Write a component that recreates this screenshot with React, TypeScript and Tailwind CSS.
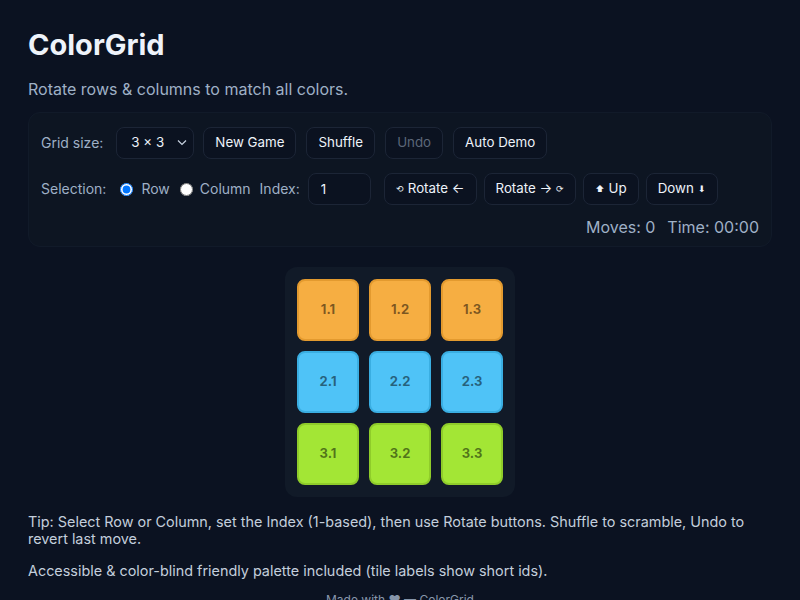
import React, { useState } from 'react';

const COLORS = ['#f6ae42', '#4fc3f7', '#a3e635'];
const BORDERS = ['#e39a2f', '#3aaee2', '#8fcc2a'];

const btnBase =
  'h-8 px-[11px] rounded-lg border border-[#1c2536] bg-[#0b1220] text-[13.33px] font-normal flex items-center gap-1';
const btn = `${btnBase} text-[#eef3fa]`;

const App: React.FC = () => {
  const [mode, setMode] = useState<'row' | 'col'>('row');
  const [index, setIndex] = useState('1');
  const size = 3;

  const tiles = Array.from({ length: size }, (_, r) =>
    Array.from({ length: size }, (_, c) => ({ r, c }))
  );

  return (
    <div
      className="min-h-screen bg-[#0b1221] text-[#e5ecf5] px-7 pt-7 pb-2"
      style={{ fontFamily: 'Inter, "Noto Sans", sans-serif' }}
    >
      {/* Header */}
      <h1 className="text-[29px] leading-[34px] font-bold text-[#eef3fa]">ColorGrid</h1>
      <p className="mt-[15px] text-base text-[#9fb0c6]">Rotate rows &amp; columns to match all colors.</p>

      {/* Controls */}
      <div className="mt-[11px] rounded-xl border border-[#111a29] bg-[#0d1522] px-3 pt-[14px] pb-[7px]">
        <div className="flex items-center">
          <span className="text-sm text-[#9fb0c6] mr-[13px]">Grid size:</span>
          <div className="relative mr-[9px]">
            <select className="appearance-none h-8 w-[78px] pl-[14px] rounded-lg border border-[#1c2536] bg-[#0b1220] text-[13.33px] text-[#eef3fa] outline-none">
              <option>3 × 3</option>
              <option>4 × 4</option>
              <option>5 × 5</option>
            </select>
            <svg
              className="pointer-events-none absolute right-[7px] top-[12px] w-[10px] h-[7px] text-[#c7d2e0]"
              viewBox="0 0 10 7"
              fill="none"
              stroke="currentColor"
              strokeWidth="1.2"
            >
              <path d="M1 1.5l4 4 4-4" />
            </svg>
          </div>
          <div className="flex items-center gap-[10px]">
            <button className={btn}>New Game</button>
            <button className={btn}>Shuffle</button>
            <button className={`${btnBase} px-[10px] text-[#5c6779]`} disabled>
              Undo
            </button>
            <button className={btn}>Auto Demo</button>
          </div>
        </div>

        <div className="flex items-center mt-[14px]">
          <span className="text-sm text-[#9fb0c6] mr-[14px]">Selection:</span>
          <label className="flex items-center gap-[8px] text-sm text-[#9fb0c6] mr-[10px]">
            <input
              type="radio"
              checked={mode === 'row'}
              onChange={() => setMode('row')}
              className="w-[13px] h-[13px] m-0"
            />
            Row
          </label>
          <label className="flex items-center gap-[7px] text-sm text-[#9fb0c6] mr-[9px]">
            <input
              type="radio"
              checked={mode === 'col'}
              onChange={() => setMode('col')}
              className="w-[13px] h-[13px] m-0"
            />
            Column
          </label>
          <span className="text-sm text-[#9fb0c6] mr-[8px]">Index:</span>
          <input
            value={index}
            onChange={(e) => setIndex(e.target.value)}
            className="h-8 w-[63px] px-[12px] rounded-lg border border-[#1c2536] bg-[#0b1220] text-[13.33px] text-[#eef3fa] outline-none mr-[13px]"
          />
          <div className="flex items-center gap-[7px]">
            <button className={`${btnBase} px-[10px] text-[#eef3fa]`}>
              <span className="text-[9px]">⟲</span> Rotate ←
            </button>
            <button className={btn}>
              Rotate → <span className="text-[9px]">⟳</span>
            </button>
            <button className={btn}>
              <span className="text-[9px]">⬆</span> Up
            </button>
            <button className={btn}>
              Down <span className="text-[9px]">⬇</span>
            </button>
          </div>
        </div>

        <div className="flex justify-end gap-3 mt-[10px] pr-0 text-base text-[#9fb0c6]">
          <span>Moves: 0</span>
          <span>Time: 00:00</span>
        </div>
      </div>

      {/* Board */}
      <div className="flex justify-center mt-5">
        <div className="rounded-xl bg-[#111a28] p-3 grid grid-cols-3 gap-[10px]">
          {tiles.flat().map(({ r, c }) => (
            <div
              key={`${r}-${c}`}
              className="w-[62px] h-[62px] rounded-lg border-2 flex items-center justify-center text-[13px] font-bold text-black/50"
              style={{ backgroundColor: COLORS[r], borderColor: BORDERS[r] }}
            >
              {r + 1}.{c + 1}
            </div>
          ))}
        </div>
      </div>

      {/* Help */}
      <p className="mt-[16px] text-[14.4px] leading-[17px] text-[#c3cedc]">
        Tip: Select Row or Column, set the Index (1-based), then use Rotate buttons. Shuffle to scramble, Undo to
        revert last move.
      </p>
      <p className="mt-[13px] text-[14.4px] text-[#c3cedc]">
        Accessible &amp; color-blind friendly palette included (tile labels show short ids).
      </p>
      <p className="mt-[10px] text-center text-xs text-[#8796ab]">Made with ♥ — ColorGrid</p>
    </div>
  );
};

export default App;
